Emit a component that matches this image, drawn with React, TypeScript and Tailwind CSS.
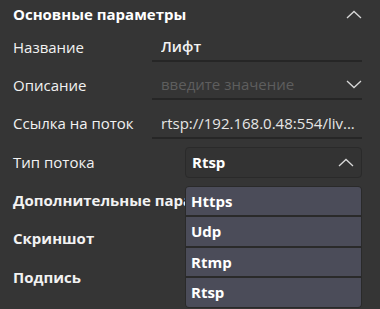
import React from "react";

const font = { fontFamily: '"Open Sans", "Noto Sans", sans-serif' };

function Chevron({ up = false }: { up?: boolean }) {
  return (
    <svg width="16" height="9" viewBox="0 0 16 9" fill="none" className="shrink-0">
      <polyline
        points={up ? "1,8 8,1.5 15,8" : "1,1 8,7.5 15,1"}
        stroke="#d8d8d8"
        strokeWidth="1.3"
        fill="none"
      />
    </svg>
  );
}

function Row({ label, bold = false, children }: { label: string; bold?: boolean; children?: React.ReactNode }) {
  return (
    <div className="flex h-[38.3px] items-center">
      <div className={`w-[139px] shrink-0 whitespace-nowrap text-[15px] text-[#f2f2f2] ${bold ? "font-bold" : ""}`}>
        {label}
      </div>
      {children}
    </div>
  );
}

function Field({ children, chevron = false }: { children: React.ReactNode; chevron?: boolean }) {
  return (
    <div className="flex h-[30px] flex-1 items-center border-b-2 border-[#262626] pl-[9px]">
      <div className="flex-1 truncate">{children}</div>
      {chevron && <Chevron />}
    </div>
  );
}

export default function App() {
  const options = ["Https", "Udp", "Rtmp", "Rtsp"];
  return (
    <div className="h-[309px] w-[380px] overflow-hidden bg-[#353535] pl-[13px] pr-[18px]" style={font}>
      <div className="flex h-[28px] items-center justify-between">
        <span className="text-[15px] font-bold text-white">Основные параметры</span>
        <Chevron up />
      </div>
      <Row label="Название">
        <Field>
          <span className="text-[15px] font-semibold text-[#f2f2f2]">Лифт</span>
        </Field>
      </Row>
      <Row label="Описание">
        <Field chevron>
          <span className="text-[15px] text-[#5e5e5e]">введите значение</span>
        </Field>
      </Row>
      <Row label="Ссылка на поток">
        <Field>
          <span className="text-[15px] text-[#e6e6e6]">rtsp://192.168.0.48:554/liv...</span>
        </Field>
      </Row>
      <Row label="Тип потока">
        <div className="relative ml-[33px] flex-1">
          <div className="flex h-[31px] items-center justify-between rounded-[4px] border border-[#2a2a2a] bg-[#333333] pl-[6px] pr-[7px]">
            <span className="text-[15px] font-bold text-white">Rtsp</span>
            <Chevron up />
          </div>
          <div className="absolute left-0 right-0 top-[calc(100%+8px)] z-10 flex flex-col gap-[2px] overflow-hidden rounded-[4px] border border-[#2a2a2a] bg-[#2a2a2a]">
            {options.map((o) => (
              <div key={o} className="flex h-[28.5px] items-center bg-[#4b4c59] pl-[5px] text-[15px] font-bold text-white">
                {o}
              </div>
            ))}
          </div>
        </div>
      </Row>
      <Row label="Дополнительные параметры" bold />
      <Row label="Скриншот" bold />
      <Row label="Подпись" bold />
      <Row label="Надпись" bold />
    </div>
  );
}
